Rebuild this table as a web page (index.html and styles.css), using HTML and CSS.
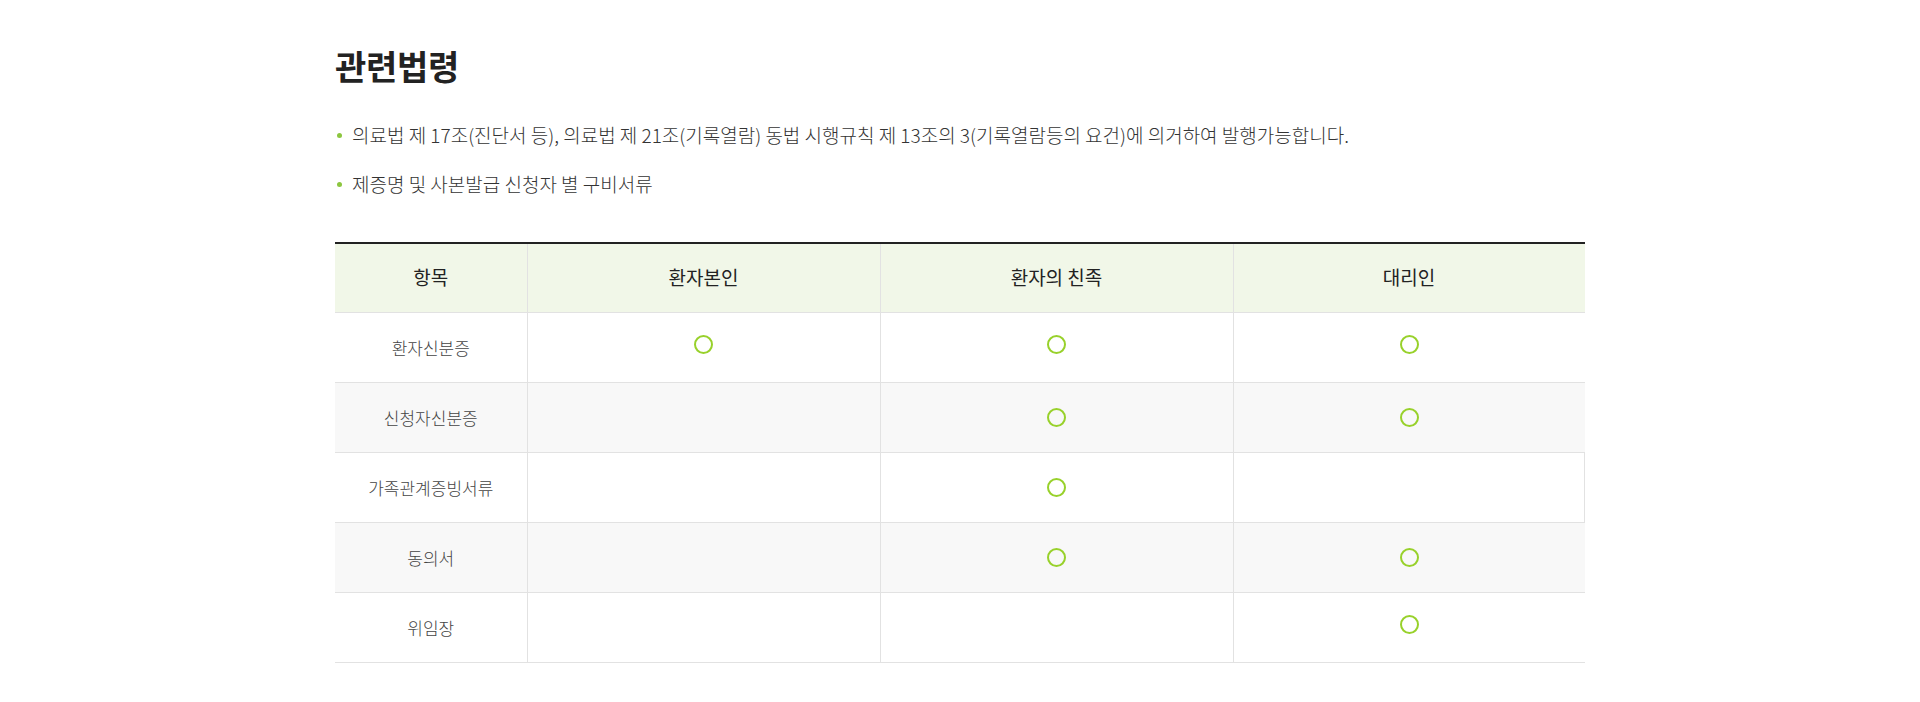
FILE: index.html
```html
<!DOCTYPE html>
<html>
<head>
	<meta charset="utf-8">
	<title>관련법령</title>
	<link rel="stylesheet" href="styles.css">
</head>
<body>
<div class="lawBox">
	<h2 class="lawBox-tit">관련법령</h2>
	<ul class="lawBox-list">
		<li>의료법 제 17조(진단서 등), 의료법 제 21조(기록열람) 동법 시행규칙 제 13조의 3(기록열람등의 요건)에 의거하여 발행가능합니다.</li>
		<li>제증명 및 사본발급 신청자 별 구비서류</li>
	</ul>
	<table class="lawBox-table">
		<colgroup>
			<col style="width: 192px;">
			<col style="width: 353px;">
			<col style="width: 353px;">
			<col>
		</colgroup>
		<thead>
			<tr>
				<th>항목</th>
				<th>환자본인</th>
				<th>환자의 친족</th>
				<th>대리인</th>
			</tr>
		</thead>
		<tbody>
			<tr>
				<td>환자신분증</td>
				<td><span class="ok up"></span></td>
				<td><span class="ok up"></span></td>
				<td><span class="ok up"></span></td>
			</tr>
			<tr class="even">
				<td>신청자신분증</td>
				<td></td>
				<td><span class="ok"></span></td>
				<td><span class="ok"></span></td>
			</tr>
			<tr>
				<td>가족관계증빙서류</td>
				<td></td>
				<td><span class="ok"></span></td>
				<td class="last"></td>
			</tr>
			<tr class="even">
				<td>동의서</td>
				<td></td>
				<td><span class="ok"></span></td>
				<td><span class="ok"></span></td>
			</tr>
			<tr>
				<td>위임장</td>
				<td></td>
				<td></td>
				<td><span class="ok up"></span></td>
			</tr>
		</tbody>
	</table>
</div>
</body>
</html>
```

FILE: styles.css
```css
body {margin: 0; background: #fff; font-family: "Noto Sans CJK KR", "Noto Sans", sans-serif; color: #222;}

.lawBox {width: 1250px; margin: 0 auto; padding-top: 46px;}
.lawBox-tit {margin: 0; font-size: 34px; line-height: 40px; font-weight: 700; color: #222; letter-spacing: -0.3px;}

.lawBox-list {margin: 34px 0 0; padding: 0; list-style: none;}
.lawBox-list li {position: relative; padding-left: 17px; font-size: 19px; line-height: 30px; font-weight: 300; color: #333;}
.lawBox-list li + li {margin-top: 19px;}
.lawBox-list li:before {content: ""; position: absolute; left: 2px; top: 13px; width: 5px; height: 5px; border-radius: 50%; background: #8cc63f;}

.lawBox-table {width: 100%; margin-top: 43px; border-collapse: collapse; table-layout: fixed; border-top: 2px solid #222;}
.lawBox-table th {height: 65px; padding: 0 0 3px; background: #f1f7e8; font-size: 19px; font-weight: 400; color: #222; border-bottom: 1px solid #e2e2e2;}
.lawBox-table td {height: 69px; padding: 0; text-align: center; font-size: 17px; font-weight: 300; color: #444; border-bottom: 1px solid #e2e2e2;}
.lawBox-table th + th, .lawBox-table td + td {border-left: 1px solid #e2e2e2;}
.lawBox-table .even td {background: #f8f8f8;}
.lawBox-table td.last {border-right: 1px solid #e2e2e2;}

.ok {display: block; width: 15px; height: 15px; margin: 0 auto; border: 2px solid #98d12b; border-radius: 50%;}
.ok.up {margin-top: -6px;}
```
